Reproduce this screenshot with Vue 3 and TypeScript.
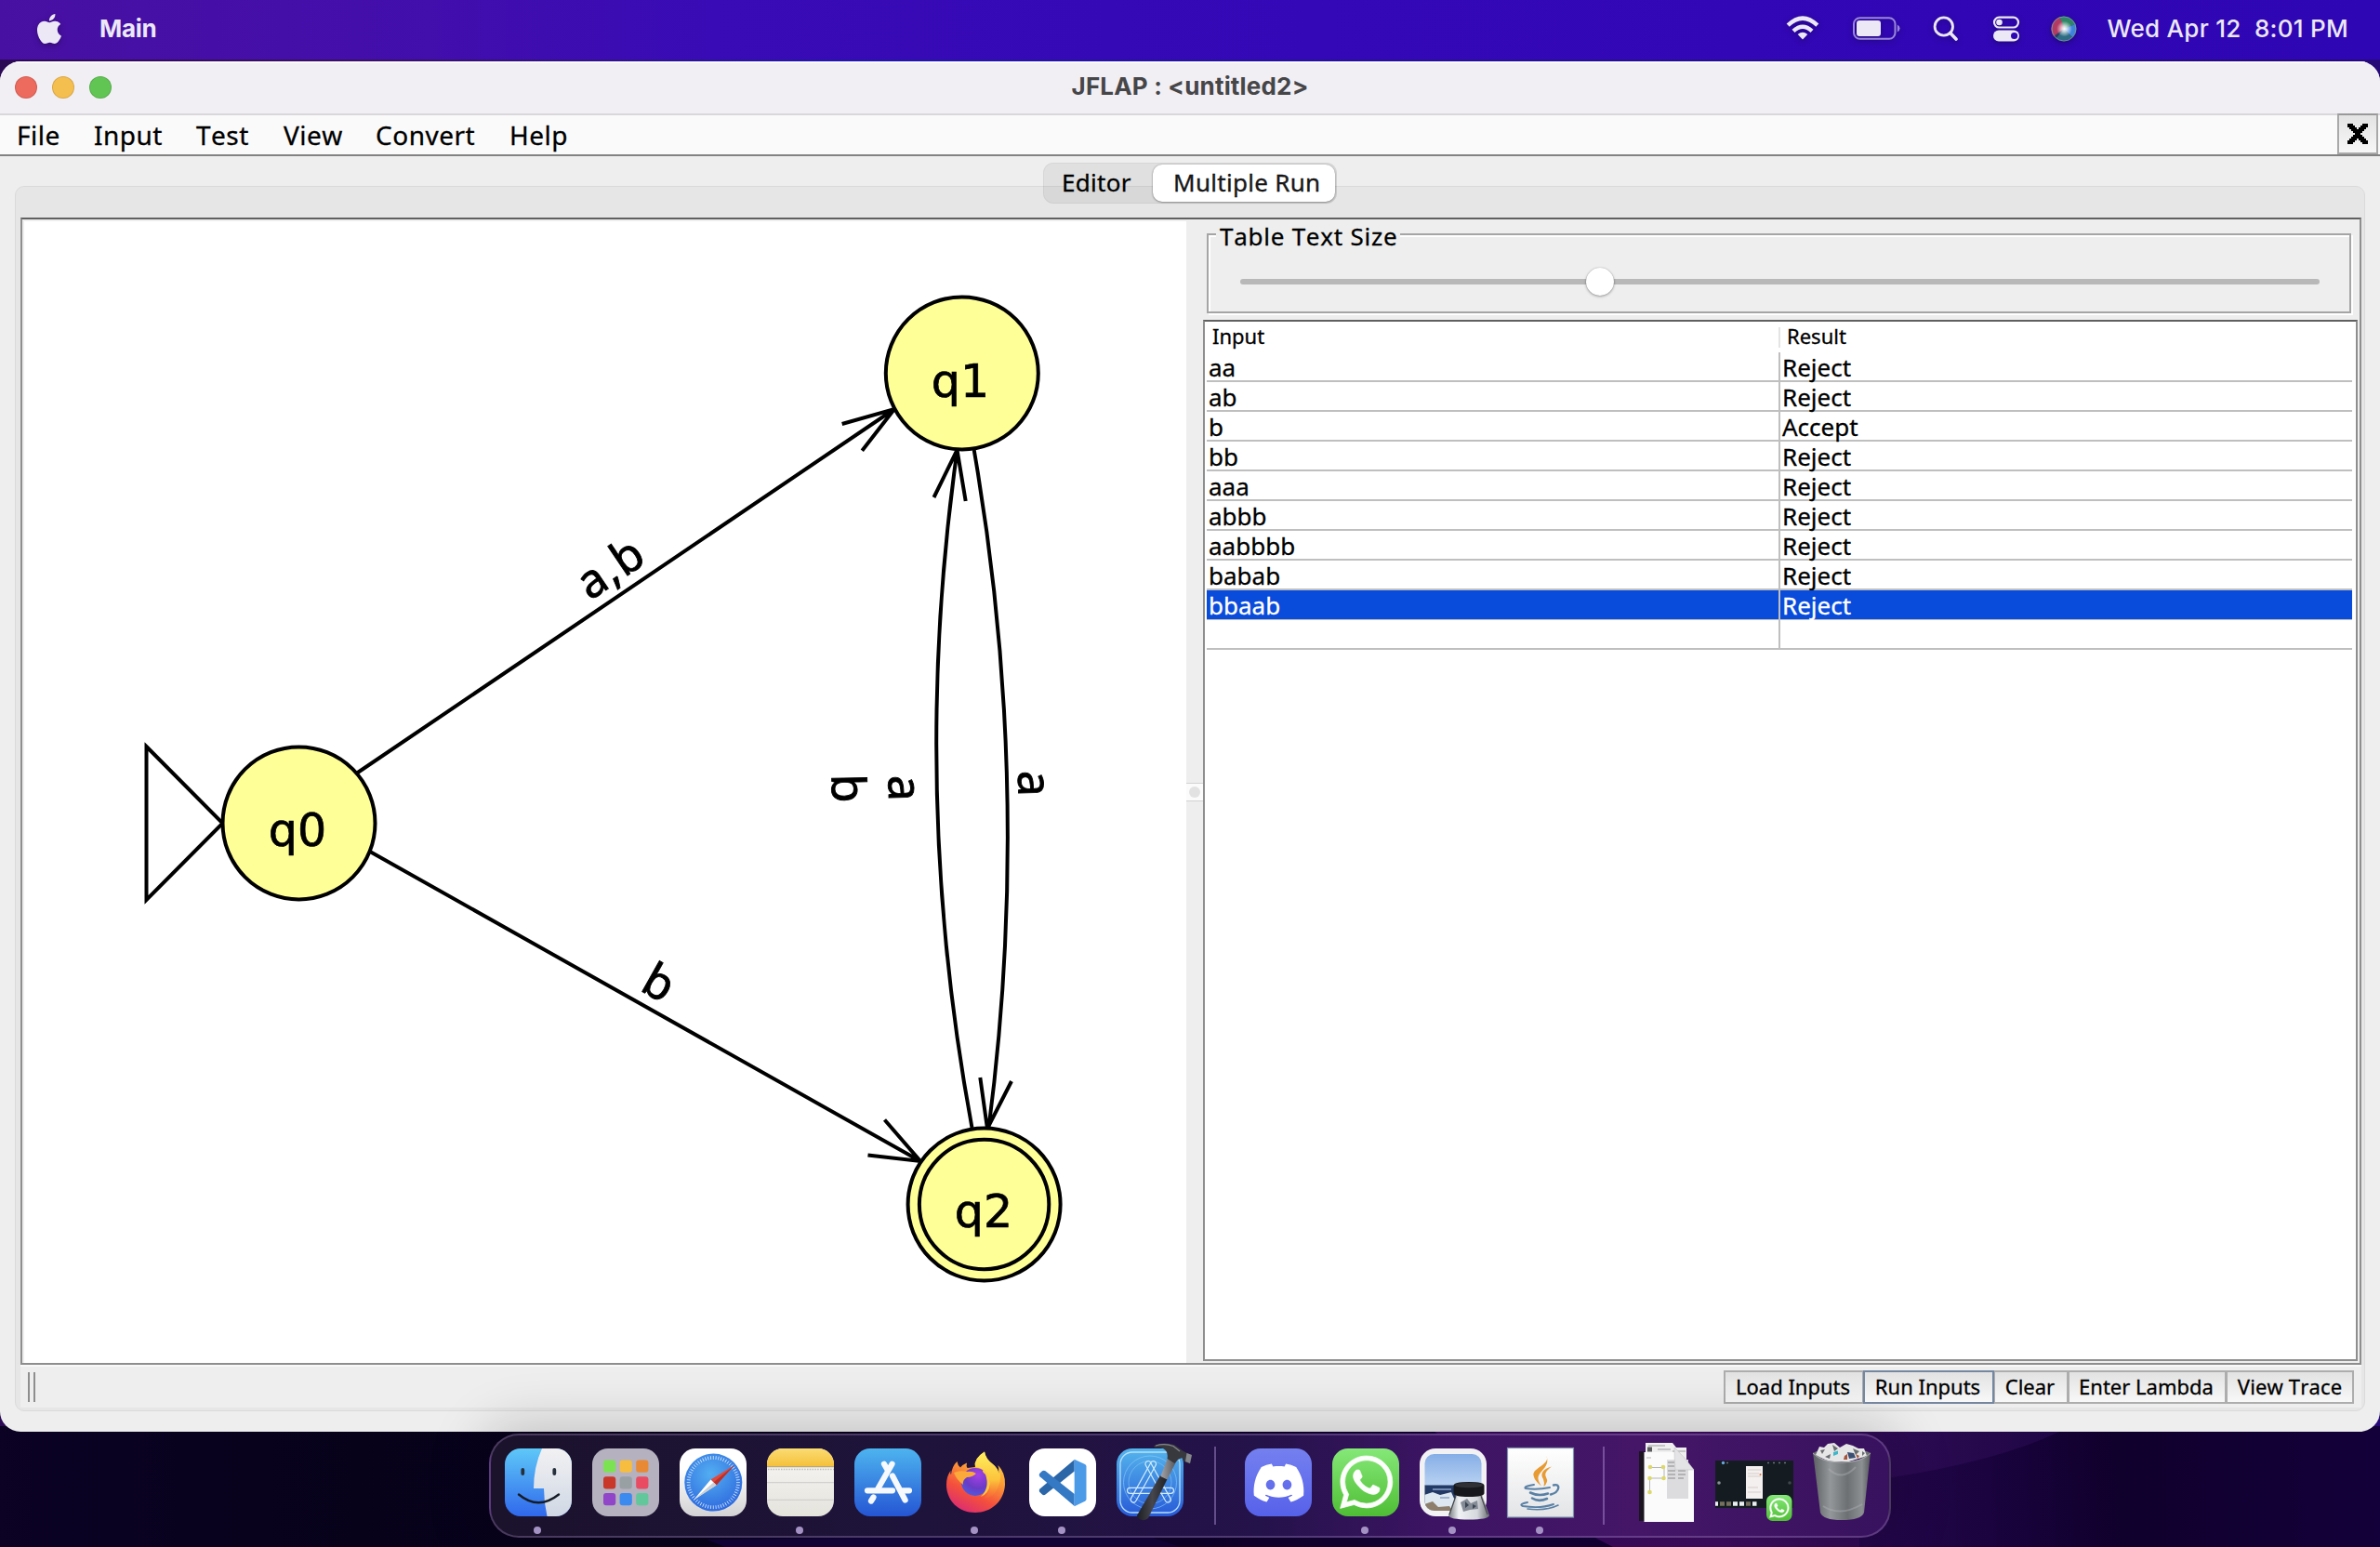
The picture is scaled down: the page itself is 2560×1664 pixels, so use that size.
<script setup lang="ts">
interface Run {
  input: string
  result: string
}

const menus: { label: string; key: string }[] = [
  { label: 'File', key: 'file' },
  { label: 'Input', key: 'input' },
  { label: 'Test', key: 'test' },
  { label: 'View', key: 'view' },
  { label: 'Convert', key: 'convert' },
  { label: 'Help', key: 'help' },
]

const runs: Run[] = [
  { input: 'aa', result: 'Reject' },
  { input: 'ab', result: 'Reject' },
  { input: 'b', result: 'Accept' },
  { input: 'bb', result: 'Reject' },
  { input: 'aaa', result: 'Reject' },
  { input: 'abbb', result: 'Reject' },
  { input: 'aabbbb', result: 'Reject' },
  { input: 'babab', result: 'Reject' },
  { input: 'bbaab', result: 'Reject' },
  { input: '', result: '' },
]
const selectedRow = 8

const actions: { label: string; key: string }[] = [
  { label: 'Load Inputs', key: 'load' },
  { label: 'Run Inputs', key: 'run' },
  { label: 'Clear', key: 'clear' },
  { label: 'Enter Lambda', key: 'lambda' },
  { label: 'View Trace', key: 'trace' },
]

const launchTiles: string[] = [
  '#7be352', '#f6bd3f', '#e88a35',
  '#c9362a', '#98a0a4', '#e94b62',
  '#9145c8', '#3a8af0', '#62c79b',
]

const ticks: number[] = Array.from({ length: 60 }, (_, i) => i * 6)
</script>

<template>
  <div class="desktop">
    <svg class="wallpaper" width="2560" height="130" viewBox="0 0 2560 130">
      <defs>
        <linearGradient id="wall" x1="0" x2="1" y1="0" y2="0">
          <stop offset="0" stop-color="#0b0224" />
          <stop offset=".15" stop-color="#07021a" />
          <stop offset=".4" stop-color="#090120" />
          <stop offset=".6" stop-color="#140038" />
          <stop offset="1" stop-color="#12003a" />
        </linearGradient>
        <linearGradient id="wave" gradientUnits="userSpaceOnUse" x1="1534" x2="2230" y1="0" y2="0">
          <stop offset="0" stop-color="#380a5c" />
          <stop offset=".45" stop-color="#400c64" />
          <stop offset=".75" stop-color="#2b0a52" />
          <stop offset="1" stop-color="#1e0644" />
        </linearGradient>
        <linearGradient id="night" gradientUnits="userSpaceOnUse" x1="2000" x2="2560" y1="90" y2="60">
          <stop offset="0" stop-color="#25074c" />
          <stop offset=".25" stop-color="#1a033e" />
          <stop offset=".5" stop-color="#10002c" />
          <stop offset="1" stop-color="#13003a" />
        </linearGradient>
      </defs>
      <rect width="2560" height="130" fill="url(#wall)" />
      <path d="M780 130 L760 122 Q1000 118 1240 120 L1270 130Z" fill="#13033c" />
      <path d="M1534 0 H2300 V130 H1735 L1710 117Z" fill="url(#wave)" />
      <path d="M2215 6 Q2140 42 2000 60 V130 H2560 V0 H2225Z" fill="url(#night)" />
    </svg>

    <header class="menubar">
      <div class="mb-left">
        <svg class="apple" width="32" height="32" viewBox="0 0 24 24" fill="#ece8f6">
          <path d="M12.152 6.896c-.948 0-2.415-1.078-3.96-1.04-2.04.027-3.91 1.183-4.961 3.014-2.117 3.675-.546 9.103 1.519 12.09 1.013 1.454 2.208 3.09 3.792 3.039 1.52-.065 2.09-.987 3.935-.987 1.831 0 2.35.987 3.96.948 1.637-.026 2.676-1.48 3.676-2.948 1.156-1.688 1.636-3.325 1.662-3.415-.039-.013-3.182-1.221-3.22-4.857-.026-3.04 2.48-4.494 2.597-4.559-1.429-2.09-3.623-2.324-4.39-2.376-2-.156-3.675 1.09-4.61 1.09zM15.53 3.83c.843-1.012 1.4-2.427 1.245-3.83-1.207.052-2.662.805-3.532 1.818-.78.896-1.454 2.338-1.273 3.714 1.338.104 2.715-.688 3.559-1.701" />
        </svg>
        <span class="app-name">Main</span>
      </div>
      <div class="mb-right">
        <svg width="36" height="28" viewBox="0 0 36 28">
          <g fill="none" stroke="#ece8f6" stroke-width="4.4">
            <path d="M2.2 10.2 Q18 -5 33.8 10.2" />
            <path d="M8 16.3 Q18 7.2 28 16.3" />
          </g>
          <path d="M18 25.500 L12.700 20 Q18 15.400 23.300 20Z" fill="#ece8f6" />
        </svg>
        <svg class="battery" width="51" height="26" viewBox="0 0 51 26">
          <rect x="1" y="1.200" width="44.500" height="22.600" rx="6.500" fill="none" stroke="#9a86dc" stroke-width="2" />
          <rect x="4" y="4" width="26" height="17" rx="3" fill="#ece8f6" />
          <path d="M47.800 8.500 Q50.600 10 50.600 12.500 T47.800 16.500Z" fill="#9a86dc" />
        </svg>
        <svg class="search" width="28" height="28" viewBox="0 0 28 28">
          <circle cx="11.800" cy="11.500" r="9.700" fill="none" stroke="#ece8f6" stroke-width="2.800" />
          <path d="M18.800 18.600 L25 25" stroke="#ece8f6" stroke-width="3.600" stroke-linecap="round" />
        </svg>
        <svg class="control" width="30" height="28" viewBox="0 0 30 28">
          <rect x="2" y="1.700" width="26" height="10.800" rx="5.400" fill="none" stroke="#ece8f6" stroke-width="2.200" />
          <circle cx="7.500" cy="7" r="3.300" fill="#ece8f6" />
          <rect x="1" y="15.600" width="28" height="12" rx="6" fill="#ece8f6" />
          <circle cx="23.600" cy="21.500" r="3.600" fill="#2f06b4" />
        </svg>
        <svg class="siri" width="28" height="28" viewBox="0 0 28 28">
          <defs>
            <radialGradient id="siriGlow" cx=".5" cy=".5" r=".5">
              <stop offset="0" stop-color="#fff" />
              <stop offset=".3" stop-color="#fff" stop-opacity=".75" />
              <stop offset="1" stop-color="#fff" stop-opacity="0" />
            </radialGradient>
          </defs>
          <circle cx="14" cy="14" r="13.600" fill="#2b3f63" />
          <path d="M14 14 L3 22 A13.600 13.600 0 0 1 9 1.500 Q14 6 14 14Z" fill="#b23a63" />
          <path d="M14 14 Q12 5 9 1.500 A13.600 13.600 0 0 1 26 9Z" fill="#2f8567" />
          <path d="M14 14 L26 9 A13.600 13.600 0 0 1 23 23Z" fill="#3d83dc" />
          <path d="M14 14 L23 23 A13.600 13.600 0 0 1 6 24Z" fill="#2e6c84" />
          <circle cx="14" cy="14" r="13" fill="none" stroke="#79a3ac" stroke-width="1" opacity=".8" />
          <circle cx="14.500" cy="14" r="8.500" fill="url(#siriGlow)" />
        </svg>
        <span class="clock">Wed Apr 12&nbsp; 8:01 PM</span>
      </div>
    </header>

    <main class="window">
      <div class="titlebar">
        <div class="lights"><i class="red" /><i class="amber" /><i class="green" /></div>
        <h1>JFLAP : &lt;untitled2&gt;</h1>
        <div class="lights-spacer" />
      </div>

      <nav class="menus">
        <span v-for="m in menus" :key="m.key" class="menu" :class="m.key">{{ m.label }}</span>
        <button class="close" aria-label="Close">
          <svg width="22" height="22" viewBox="0 0 11 11" shape-rendering="crispEdges">
            <path d="M0 0 H3 V1 H4 V2 H5 V3 H6 V2 H7 V1 H8 V0 H11 V2 H10 V3 H9 V4 H8 V5 H7 V6 H8 V7 H9 V8 H10 V9 H11 V11 H8 V10 H7 V9 H6 V8 H5 V9 H4 V10 H3 V11 H0 V9 H1 V8 H2 V7 H3 V6 H4 V5 H3 V4 H2 V3 H1 V2 H0Z" />
          </svg>
        </button>
      </nav>

      <div class="body">
        <div class="tabs">
          <span class="tab editor-tab">Editor</span>
          <span class="tab active">Multiple Run</span>
        </div>

        <section class="pane">
          <div class="split">
            <svg class="automaton" width="1250" height="1228" viewBox="26 238 1250 1228">
              <g class="ink">
                <path d="M384 831.500 L962 440 M905.700 456 L962 440 L927.300 484.800" />
                <path d="M398 916 L990 1249 M951.500 1204.500 L990 1249 L933.500 1242.500" />
                <path d="M1045.500 1213 Q978 849 1029.500 485 M1004.500 535 L1029.500 484 L1038.700 539" />
                <path d="M1047.700 484 Q1111 849 1063.500 1213 M1054.300 1159 L1062 1214 L1088 1163" />
                <path d="M157.500 803 L239.500 885.500 L157.500 968Z" fill="#fff" />
                <circle cx="321.500" cy="885.400" r="82" class="state" />
                <circle cx="1034.800" cy="401.400" r="82" class="state" />
                <circle cx="1058.600" cy="1295.500" r="82" class="state" />
                <circle cx="1058.600" cy="1295.500" r="69.700" class="state" />
              </g>
              <g class="state-name" text-anchor="middle">
                <text x="320" y="910">q0</text>
                <text x="1033" y="427">q1</text>
                <text x="1058" y="1320">q2</text>
              </g>
              <g class="edge-name">
                <text class="pair" transform="translate(634.500 646.500) rotate(-34.100)">a,b</text>
                <text transform="translate(687 1064.500) rotate(29.400)">b</text>
                <text transform="translate(1095 829) rotate(88.700)">a</text>
                <text transform="translate(955.500 834) rotate(88.700)">a</text>
                <text transform="translate(894.500 833) rotate(88.700)">b</text>
              </g>
            </svg>
            <div class="divider"><span class="handle"><i /></span></div>
            <div class="results">
              <fieldset class="sizer">
                <legend>Table Text Size</legend>
                <div class="track"><i class="knob" /></div>
              </fieldset>
              <div class="grid">
                <div class="row head"><span class="cell">Input</span><span class="cell">Result</span></div>
                <div v-for="(r, i) in runs" :key="i" class="row" :class="{ selected: i === selectedRow }">
                  <span class="cell">{{ r.input }}</span><span class="cell">{{ r.result }}</span>
                </div>
              </div>
            </div>
          </div>
          <div class="toolbar">
            <div class="grip"><i /><i /></div>
            <div class="buttons">
              <button v-for="a in actions" :key="a.key" :class="a.key">{{ a.label }}</button>
            </div>
          </div>
        </section>
      </div>
    </main>

    <footer class="dock">
      <div class="app">
        <svg width="72" height="73" viewBox="0 0 72 73">
          <defs>
            <linearGradient id="finderA" x1="0" x2="0" y1="0" y2="1"><stop offset="0" stop-color="#5ec8f8" /><stop offset="1" stop-color="#3068ec" /></linearGradient>
            <linearGradient id="finderB" x1="0" x2="0" y1="0" y2="1"><stop offset="0" stop-color="#f2f1f3" /><stop offset="1" stop-color="#cfd8e4" /></linearGradient>
            <clipPath id="tile"><rect width="72" height="73" rx="17" /></clipPath>
          </defs>
          <g clip-path="url(#tile)">
            <rect width="72" height="73" fill="url(#finderA)" />
            <path d="M40 0 Q31 20 31 43 H42 Q42 58 45.500 73 H72 V0Z" fill="url(#finderB)" />
          </g>
          <path d="M19.300 23 V27 M53.300 23 V27" stroke="#26303c" stroke-width="3.800" stroke-linecap="round" />
          <path d="M15 49.500 Q36 67 58 49.500" fill="none" stroke="#151c26" stroke-width="2.400" stroke-linecap="round" />
        </svg>
        <i class="dot" />
      </div>
      <div class="app">
        <svg width="72" height="73" viewBox="0 0 72 73">
          <rect width="72" height="73" rx="17" fill="#b5b1bf" />
          <rect v-for="(c, i) in launchTiles" :key="i" :x="12 + (i % 3) * 17.6" :y="12.600 + Math.floor(i / 3) * 17.700" width="13.200" height="13.200" rx="3" :fill="c" />
        </svg>
      </div>
      <div class="app">
        <svg width="72" height="73" viewBox="0 0 72 73">
          <defs>
            <linearGradient id="safBg" x1="0" x2="0" y1="0" y2="1"><stop offset=".3" stop-color="#fff" /><stop offset="1" stop-color="#d2d2d4" /></linearGradient>
            <radialGradient id="saf" cx=".45" cy=".35" r=".65"><stop offset="0" stop-color="#53aef2" /><stop offset="1" stop-color="#2e6ade" /></radialGradient>
          </defs>
          <rect width="72" height="73" rx="17" fill="url(#safBg)" />
          <circle cx="36.300" cy="36.600" r="31" fill="url(#saf)" />
          <path v-for="t in ticks" :key="t" d="M36.300 8 V11.800" :transform="`rotate(${t} 36.300 36.600)`" stroke="#dcecfb" stroke-width=".8" />
          <path d="M58.700 18.300 L33.500 33.500 L39.500 39.500Z" fill="#e0483c" />
          <path d="M58.700 18.300 L36.500 36.500 L39.500 39.500Z" fill="#b83029" />
          <path d="M15 55.500 L33.500 33.500 L39.500 39.500Z" fill="#fff" />
          <path d="M15 55.500 L36.500 36.500 L39.500 39.500Z" fill="#cdd0d3" />
        </svg>
      </div>
      <div class="app">
        <svg width="72" height="73" viewBox="0 0 72 73">
          <defs>
            <linearGradient id="noteTop" x1="0" x2="0" y1="0" y2="1"><stop offset="0" stop-color="#fbdc72" /><stop offset="1" stop-color="#f5c13b" /></linearGradient>
            <linearGradient id="notePaper" x1="0" x2="0" y1="0" y2="1"><stop offset="0" stop-color="#f8f7f5" /><stop offset="1" stop-color="#e4e3dc" /></linearGradient>
          </defs>
          <g clip-path="url(#tile)">
            <rect width="72" height="73" fill="url(#notePaper)" />
            <rect width="72" height="19" fill="url(#noteTop)" />
            <path d="M0 19.600 H72" stroke="#b9a778" stroke-width="1.200" />
            <path d="M1 22.500 H72" stroke="#bdbbb8" stroke-width="1.400" stroke-dasharray="1.400 1.400" />
            <path d="M0 36.700 H72 M0 55.300 H72" stroke="#d2d0cf" stroke-width="1.300" />
          </g>
        </svg>
        <i class="dot" />
      </div>
      <div class="app">
        <svg width="72" height="73" viewBox="0 0 72 73">
          <defs>
            <linearGradient id="store" x1="0" x2="0" y1="0" y2="1"><stop offset="0" stop-color="#4db4ef" /><stop offset="1" stop-color="#2555d4" /></linearGradient>
          </defs>
          <rect width="72" height="73" rx="17" fill="url(#store)" />
          <g stroke="#f6f9fe" stroke-width="6.200" stroke-linecap="round">
            <path d="M32 16.800 L35 22" />
            <path d="M40.500 16.800 L25.500 43" />
            <path d="M20.500 52.500 L18 56.500" />
            <path d="M41 29.500 L54.600 55.500" />
            <path d="M14 45.300 H41 M52 45.300 H59" />
          </g>
        </svg>
      </div>
      <div class="app">
        <svg width="72" height="73" viewBox="0 0 72 73">
          <defs>
            <linearGradient id="foxBody" x1=".8" x2=".3" y1="0" y2="1"><stop offset="0" stop-color="#fdd94c" /><stop offset=".35" stop-color="#fba035" /><stop offset=".7" stop-color="#f4503c" /><stop offset="1" stop-color="#dd2c72" /></linearGradient>
            <linearGradient id="foxTail" x1=".5" x2=".5" y1="0" y2="1"><stop offset="0" stop-color="#fff05f" /><stop offset=".6" stop-color="#fcc33c" /><stop offset="1" stop-color="#f8742f" stop-opacity=".2" /></linearGradient>
            <radialGradient id="foxGlobe" cx=".6" cy=".25" r=".8"><stop offset="0" stop-color="#a63fe8" /><stop offset=".6" stop-color="#6a3bc4" /><stop offset="1" stop-color="#4c5ce0" /></radialGradient>
          </defs>
          <path d="M16.500 14 Q17 18 20 20.500 Q23 17 27 15.500 Q26 19 27.500 21 L36 20 Q34 11 46 3.500 Q47 11 55 17 Q60 21 61.500 27 Q62 22 60.500 18 Q68.500 26 68 39 C67 57 53 69 36 69 C18 69 5 56 5 39 Q5 30 9.500 24 Q9 27 10 28 Q11 19 16.500 14Z" fill="url(#foxBody)" />
          <path d="M36 20 Q34 11 46 3.500 Q47 11 55 17 Q60 21 61.500 27 Q62 22 60.500 18 Q66 31 60 43 Q55 54 45 54 Q56 44 50 30 Q46 21 36 20Z" fill="url(#foxTail)" />
          <circle cx="36" cy="36" r="15" fill="url(#foxGlobe)" />
          <path d="M13 26 Q20 23 27 25 Q33 24 37 27 Q33 31 27 31 Q22 34 23 39 Q16 34 13 26Z" fill="#fba93a" />
          <path d="M47 28 Q42 24 45 23 Q52 27 52 38 Q51 48 42 52 Q52 42 47 28Z" fill="#fdc743" />
        </svg>
        <i class="dot" />
      </div>
      <div class="app">
        <svg width="72" height="73" viewBox="0 0 72 73">
          <rect width="72" height="73" rx="17" fill="#fff" />
          <path d="M48.700 12 V24.500 L17.500 49.500 Q15.700 50.800 14 49.500 L11.200 46.800 Q10 45 11.500 43.500Z" fill="#2a66a8" />
          <path d="M48.700 62 V49 L17.500 24.300 Q15.700 23 14 24.300 L11.200 27 Q10 28.800 11.500 30.300Z" fill="#3579c4" />
          <path d="M48.700 11.700 L60 17 Q61.500 17.800 61.500 19.500 V54.500 Q61.500 56 60 56.800 L48.700 62.200Z" fill="#4b9ae8" />
        </svg>
        <i class="dot" />
      </div>
      <div class="app">
        <svg width="72" height="73" viewBox="0 0 72 73">
          <defs>
            <linearGradient id="xc" x1="0" x2="0" y1="0" y2="1"><stop offset="0" stop-color="#54b5ec" /><stop offset="1" stop-color="#285ad8" /></linearGradient>
            <linearGradient id="hammer" x1="0" x2="1"><stop offset="0" stop-color="#1c1d22" /><stop offset=".5" stop-color="#46474e" /><stop offset="1" stop-color="#202126" /></linearGradient>
            <linearGradient id="steel" x1="0" x2="1"><stop offset="0" stop-color="#a2a4a9" /><stop offset="1" stop-color="#505157" /></linearGradient>
          </defs>
          <rect width="72" height="73" rx="17" fill="url(#xc)" />
          <rect x="4" y="4" width="64" height="65" rx="13" fill="none" stroke="#b8e0fa" stroke-width="1.300" />
          <g fill="none" stroke="#8ecbf5" stroke-width=".9">
            <circle cx="36" cy="36.500" r="28.500" opacity=".7" />
            <circle cx="36" cy="36.500" r="23" opacity=".6" />
          </g>
          <g fill="none" stroke="#d3ecfd" stroke-width="1.200">
            <rect x="-3" y="0" width="6" height="50" rx="3" transform="translate(41 14) rotate(29)" />
            <rect x="-3" y="0" width="6" height="50" rx="3" transform="translate(32.500 14) rotate(-29)" />
            <rect x="11.500" y="42.300" width="50" height="6" rx="3" />
          </g>
          <path d="M47 29 L54.500 33 L34 75 Q29 79.500 22.500 74.500 L22 72Z" fill="url(#hammer)" />
          <path d="M56 8 L65 12.500 L54.500 33.500 L47.300 30Z" fill="url(#steel)" />
          <path d="M40 -3 Q50 -7.500 62 -4 L72 3 L75 4.500 L81 7 L79 16.500 L72.500 14 L70.500 10 L66 12 L62.500 16 L54.500 11 Q56 3 50 0 Q46 -2 41 -1Z" fill="#38393f" />
          <path d="M42 -3 Q52 -6 61 -2.500 L68 3" fill="none" stroke="#85878d" stroke-width="1.300" />
          <path d="M75.500 5 L81 7 L79 16 L74 14Z" fill="#85878d" />
        </svg>
      </div>
      <i class="sep first" />
      <div class="app">
        <svg width="72" height="73" viewBox="0 0 72 73">
          <defs>
            <linearGradient id="disc" x1="0" x2="0" y1="0" y2="1"><stop offset="0" stop-color="#7480ef" /><stop offset="1" stop-color="#5661ea" /></linearGradient>
          </defs>
          <rect width="72" height="73" rx="17" fill="url(#disc)" />
          <path transform="translate(9.600 10.200) scale(2.240)" fill="#fff" d="M20.317 4.3698a19.7913 19.7913 0 00-4.8851-1.5152.0741.0741 0 00-.0785.0371c-.211.3753-.4447.8648-.6083 1.2495-1.8447-.2762-3.68-.2762-5.4868 0-.1636-.3933-.4058-.8742-.6177-1.2495a.077.077 0 00-.0785-.037 19.7363 19.7363 0 00-4.8852 1.515.0699.0699 0 00-.0321.0277C.5334 9.0458-.319 13.5799.0992 18.0578a.0824.0824 0 00.0312.0561c2.0528 1.5076 4.0413 2.4228 5.9929 3.0294a.0777.0777 0 00.0842-.0276c.4616-.6304.8731-1.2952 1.226-1.9942a.076.076 0 00-.0416-.1057c-.6528-.2476-1.2743-.5495-1.8722-.8923a.077.077 0 01-.0076-.1277c.1258-.0943.2517-.1923.3718-.2914a.0743.0743 0 01.0776-.0105c3.9278 1.7933 8.18 1.7933 12.0614 0a.0739.0739 0 01.0785.0095c.1202.099.246.1981.3728.2924a.077.077 0 01-.0066.1276 12.2986 12.2986 0 01-1.873.8914.0766.0766 0 00-.0407.1067c.3604.698.7719 1.3628 1.225 1.9932a.076.076 0 00.0842.0286c1.961-.6067 3.9495-1.5219 6.0023-3.0294a.077.077 0 00.0313-.0552c.5004-5.177-.8382-9.6739-3.5485-13.6604a.061.061 0 00-.0312-.0286zM8.02 15.3312c-1.1825 0-2.1569-1.0857-2.1569-2.419 0-1.3332.9555-2.4189 2.157-2.4189 1.2108 0 2.1757 1.0952 2.1568 2.419 0 1.3332-.9555 2.4189-2.1569 2.4189zm7.9748 0c-1.1825 0-2.1569-1.0857-2.1569-2.419 0-1.3332.9554-2.4189 2.1569-2.4189 1.2108 0 2.1757 1.0952 2.1568 2.419 0 1.3332-.946 2.4189-2.1568 2.4189Z" />
        </svg>
      </div>
      <div class="app">
        <svg width="72" height="73" viewBox="0 0 72 73">
          <defs>
            <linearGradient id="wa" x1="0" x2="0" y1="0" y2="1"><stop offset="0" stop-color="#85e878" /><stop offset="1" stop-color="#4fbe35" /></linearGradient>
            <path id="waGlyph" d="M17.472 14.382c-.297-.149-1.758-.867-2.03-.967-.273-.099-.471-.148-.67.15-.197.297-.767.966-.94 1.164-.173.199-.347.223-.644.075-.297-.15-1.255-.463-2.39-1.475-.883-.788-1.48-1.761-1.653-2.059-.173-.297-.018-.458.13-.606.134-.133.298-.347.446-.52.149-.174.198-.298.298-.497.099-.198.05-.371-.025-.52-.075-.149-.669-1.612-.916-2.207-.242-.579-.487-.5-.669-.51-.173-.008-.371-.01-.57-.01-.198 0-.52.074-.792.372-.272.297-1.04 1.016-1.04 2.479 0 1.462 1.065 2.875 1.213 3.074.149.198 2.096 3.2 5.077 4.487.709.306 1.262.489 1.694.625.712.227 1.36.195 1.871.118.571-.085 1.758-.719 2.006-1.413.248-.694.248-1.289.173-1.413-.074-.124-.272-.198-.57-.347m-5.421 7.403h-.004a9.87 9.87 0 01-5.031-1.378l-.361-.214-3.741.982.998-3.648-.235-.374a9.86 9.86 0 01-1.51-5.26c.001-5.45 4.436-9.884 9.888-9.884 2.64 0 5.122 1.03 6.988 2.898a9.825 9.825 0 012.893 6.994c-.003 5.45-4.437 9.884-9.885 9.884m8.413-18.297A11.815 11.815 0 0012.05 0C5.495 0 .16 5.335.157 11.892c0 2.096.547 4.142 1.588 5.945L.057 24l6.305-1.654a11.882 11.882 0 005.683 1.448h.005c6.554 0 11.89-5.335 11.893-11.893a11.821 11.821 0 00-3.48-8.413Z" />
          </defs>
          <rect width="72" height="73" rx="17" fill="url(#wa)" />
          <use href="#waGlyph" transform="translate(8.500 8) scale(2.350)" fill="#fdfffc" stroke="#fdfffc" stroke-width=".3" />
        </svg>
        <i class="dot" />
      </div>
      <div class="app">
        <svg width="72" height="73" viewBox="0 0 72 73">
          <defs>
            <linearGradient id="sky" x1="0" x2="0" y1="0" y2="1"><stop offset="0" stop-color="#84ade6" /><stop offset="1" stop-color="#b9d2f2" /></linearGradient>
            <linearGradient id="glass" x1="0" x2="1"><stop offset="0" stop-color="#777b80" /><stop offset=".25" stop-color="#f0f2f4" /><stop offset=".7" stop-color="#d5d8dc" /><stop offset="1" stop-color="#686b70" /></linearGradient>
            <clipPath id="photo"><rect x="5.500" y="6" width="61" height="61" rx="10" /></clipPath>
          </defs>
          <rect width="72" height="73" rx="17" fill="#f2f1f3" />
          <g clip-path="url(#photo)">
            <rect x="5" y="5" width="62" height="35" fill="url(#sky)" />
            <rect x="5" y="39.500" width="62" height="28" fill="#243a66" />
            <path d="M5 50 L14 47 L22 50 L34 47 L38 56 V68 H5Z" fill="#dde8f1" />
            <path d="M5 60 L14 57 L20 63 L32 62 L36 68 H5Z" fill="#8d7f6b" />
            <path d="M14 44 H34 M22 53 H32" stroke="#8aa3c8" stroke-width="1.500" />
          </g>
          <path d="M39 50 L67 50 L75 72 Q74 76.500 53 76.500 Q32 76.500 31 72Z" fill="url(#glass)" />
          <path d="M44 58 L51 54 L55 59 L62 56 L63 65 L54 66 L47 68Z" fill="#858c96" />
          <path d="M49 57 L53 61 L49 64Z M57 60 L61 62 L57 65Z" fill="#3c4654" />
          <path d="M39 51 L32 71 M66 51 L73 71" stroke="#44474b" stroke-width="1.200" />
          <path d="M36.500 40 Q36.500 36 53 36 Q69.500 36 69.500 40 V48 Q69.500 52 53 52 Q36.500 52 36.500 48Z" fill="#17181b" />
          <ellipse cx="53" cy="39.500" rx="15" ry="2.700" fill="#2f3135" />
        </svg>
        <i class="dot" />
      </div>
      <div class="app">
        <svg width="72" height="73" viewBox="0 0 72 73">
          <defs>
            <linearGradient id="jar" x1="0" x2="0" y1="0" y2="1"><stop offset="0" stop-color="#fff" /><stop offset="1" stop-color="#e3e4e6" /></linearGradient>
          </defs>
          <rect x=".5" y="-.5" width="71" height="74.500" fill="url(#jar)" stroke="#7d93ab" stroke-width="1.200" />
          <path d="M42.500 8 C47 17 27 21 28.500 29 C29.500 34 33 37 37 40.500 C33 34 32 31 36 26 C40 21 45.500 17 42.500 8Z" fill="#e79b32" />
          <path d="M48 19.500 C39 22 35 27 39 33 Q40.500 36 39.500 41 Q45 36 42 31 C40 27 42 24 48 19.500Z" fill="#e79b32" />
          <g fill="none" stroke="#5a80a5" stroke-linecap="round">
            <path d="M29 39 Q17 41 20 43 Q32 45 46 42" stroke-width="2" />
            <path d="M50 39.500 C58 37 57 47 47 49.500" stroke-width="2.400" />
            <path d="M25 47.500 Q34 52 44 48.500" stroke-width="2.600" />
            <path d="M27 53.500 Q34 58 43 54" stroke-width="2.600" />
            <path d="M22 58 Q12 60 17 62 Q36 65 50 60" stroke-width="2" />
            <path d="M22 65 Q42 67.500 55 61" stroke-width="1.600" />
          </g>
        </svg>
        <i class="dot" />
      </div>
      <i class="sep second" />
      <div class="app docs">
        <svg width="60" height="73" viewBox="0 0 60 73">
          <path d="M0 3 H6 V78 H0Z" fill="#1b1520" />
          <path d="M7 -6 H36 L40 -1 H51 V20 H7Z" fill="#efeff0" />
          <path d="M10 -3 H28 M20 1 H34 M36 3 H50" stroke="#b9b9bb" stroke-width="1.500" />
          <rect x="9" y="-1.500" width="5" height="5" fill="#5c5c5e" />
          <path d="M5.500 4 H38 L59 23 V79 H5.500Z" fill="#fbfbfc" />
          <rect x="30" y="12" width="23" height="42" fill="#dcdcde" />
          <path d="M31 15 H38 M31 19 H38 M31 24 H50 M31 28 H50 M31 32 H48" stroke="#8a8a8d" stroke-width="1.200" stroke-dasharray="8 3" />
          <path d="M8 10 H13 M12 20.500 H27 M12 32 H27 M27 20.500 V32 M11.500 33 V47" fill="none" stroke="#a4a4a8" stroke-width=".8" />
          <g fill="#dcd96a"><circle cx="12" cy="20" r="2.300" /><circle cx="26" cy="20" r="2.300" /><circle cx="11.500" cy="32" r="2.300" /><circle cx="26.500" cy="32" r="2.300" /><circle cx="11.500" cy="47" r="2.300" /></g>
          <path d="M38 -1 Q38 12 39 23 H59 Q48 8 38 -1Z" fill="#e4e4e6" stroke="#c3c3c6" stroke-width=".6" />
        </svg>
      </div>
      <div class="app shot">
        <svg width="84" height="73" viewBox="0 0 84 73">
          <rect y="13" width="84" height="51" fill="#141c22" />
          <rect x="33" y="19" width="18" height="35" fill="#f3f0ef" />
          <path d="M35 23 H49 M35 27 H47 M35 30 H49 M35 42 H46 M35 47 H49" stroke="#c9bfbd" stroke-width=".7" />
          <circle cx="48.500" cy="28" r="1" fill="#e0763c" />
          <circle cx="4" cy="37" r="1.800" fill="#8a9094" />
          <circle cx="80" cy="37" r="1.800" fill="#3d474c" />
          <circle cx="8.500" cy="15.500" r="1.700" fill="#6aa7d9" />
          <path d="M12 15.500 H17 M56 15.500 H80" stroke="#68727a" stroke-width="1.300" stroke-dasharray="2 4" />
          <path d="M0 59.500 H3 M19 59.500 H24 M26 59.500 H31 M40 59.500 H44.500" stroke="#eceff0" stroke-width="4.600" />
          <path d="M5 59.500 H10 M12 59.500 H17 M33 59.500 H38" stroke="#77705f" stroke-width="4.600" />
          <rect x="55" y="50" width="27.500" height="28" rx="6.500" fill="url(#wa)" />
          <use href="#waGlyph" transform="translate(58.300 53.400) scale(.880)" fill="#fdfffc" stroke="#fdfffc" stroke-width=".3" />
        </svg>
      </div>
      <div class="app trash">
        <svg width="64" height="73" viewBox="0 0 64 73">
          <defs>
            <linearGradient id="can" x1="0" x2="1"><stop offset="0" stop-color="#5d6063" /><stop offset=".3" stop-color="#94979a" /><stop offset=".6" stop-color="#6d7073" /><stop offset=".85" stop-color="#8d9093" /><stop offset="1" stop-color="#55585b" /></linearGradient>
          </defs>
          <ellipse cx="32" cy="6" rx="31" ry="6" fill="#6c6f72" />
          <path d="M4 7 L8 -2 L13 -1 L17 -5 L24 -6 L30 -1 L37 -5 L44 -3 L50 0 L56 0 L59 8 L40 14 H18Z" fill="#e6e6e7" />
          <path d="M9 2 L14 1 L11 6Z M22 -4 L28 0 L24 3Z M44 0 L51 3 L47 7Z M14 9 L20 6 L19 11Z M54 3 L57 5 L54 8Z" fill="#696c6f" />
          <path d="M23 4 L28 2.500 L28 6 L23 8Z" fill="#3fb7c9" />
          <path d="M38 4 L45 5 L47 10 L40 11Z" fill="#3c4e74" />
          <path d="M35 8 L38 6 L38 12 L34 12Z M47 6 L51 8 L49 11Z" fill="#a6553a" />
          <path d="M1 4 Q10 14.500 32 14.500 Q54 14.500 63 4 L56 69 Q53 77 32 77 Q12 77 9 69Z" fill="url(#can)" />
          <path d="M1 5 Q10 15 32 15 Q54 15 63 5" fill="none" stroke="#a9acaf" stroke-width="1" />
          <path d="M18 22 Q32 36 47 20 M12 62 Q30 74 54 60" fill="none" stroke="#b2b5b8" stroke-width="2" opacity=".4" />
        </svg>
      </div>
    </footer>
  </div>
</template>

<style>
body {
  margin: 0;
}
</style>

<style scoped>
.desktop {
  position: relative;
  display: flex;
  flex-direction: column;
  align-items: center;
  width: 2560px;
  height: 1664px;
  overflow: hidden;
  background: linear-gradient(90deg, #2c0a56, #3b1160 15%, #2318a8 35%, #260a78);
  font-family: 'Noto Sans', 'Liberation Sans', sans-serif;
  font-kerning: none;
  color: #000;
}
.wallpaper {
  position: absolute;
  left: 0;
  bottom: 0;
}
i {
  display: block;
}
svg {
  display: block;
  overflow: visible;
  flex: none;
}

.menubar {
  display: flex;
  justify-content: space-between;
  width: 100%;
  height: 64px;
  box-sizing: border-box;
  padding: 0 34px 0 37px;
  background: linear-gradient(90deg, #4810a2, #420eac 18%, #380bb6 30%, #3408b6 55%, #2f06b4);
  font-family: Inter, sans-serif;
  font-kerning: normal;
  font-size: 26px;
  line-height: 62px;
  color: #ece8f6;
}
.mb-left,
.mb-right {
  display: flex;
  align-items: center;
  height: 62px;
}
.mb-left svg,
.mb-right svg {
  filter: drop-shadow(0 2px 3px rgba(0, 0, 0, 0.3));
}
.app-name {
  margin-left: 38px;
  font-weight: 700;
  letter-spacing: -0.3px;
}
.battery { margin-left: 36px; }
.search { margin-left: 35px; }
.control { margin-left: 36px; }
.siri { margin-left: 33px; }
.clock {
  margin-left: 32px;
  font-weight: 500;
  letter-spacing: 0.27px;
  white-space: pre;
}

.window {
  position: relative;
  display: flex;
  flex-direction: column;
  width: 2560px;
  height: 1474px;
  margin-top: 2px;
  border-radius: 22px;
  overflow: hidden;
  background: #eee;
}
.titlebar {
  display: flex;
  align-items: center;
  justify-content: space-between;
  height: 56px;
  padding: 0 16px;
  border-bottom: 2px solid #dad7dc;
  background: #f1eff4;
  box-shadow: inset 0 2px 0 #fbfafc;
}
.lights {
  display: flex;
  gap: 16px;
  width: 104px;
}
.lights-spacer {
  width: 104px;
}
.lights i {
  width: 24px;
  height: 24px;
  box-sizing: border-box;
  border: 1px solid rgba(0, 0, 0, 0.12);
  border-radius: 50%;
}
.red { background: #ed6a5e; }
.amber { background: #f5bf4f; }
.green { background: #61c554; }
h1 {
  margin: 0;
  padding-bottom: 2px;
  font: 700 26px/52px Inter, sans-serif;
  font-kerning: normal;
  letter-spacing: 0.18px;
  color: #464649;
}

.menus {
  display: flex;
  height: 42px;
  padding: 0 2px 0 18px;
  border-bottom: 2px solid #828282;
  background: #fafafa;
  font-size: 28px;
  line-height: 42px;
  letter-spacing: 0.5px;
  -webkit-text-stroke: 0.3px #000;
}
.menu { width: 83px; flex: none; }
.menu.input { width: 110px; }
.menu.test { width: 94px; }
.menu.view { width: 99px; }
.menu.convert { width: 144px; }
.close {
  display: flex;
  align-items: center;
  justify-content: center;
  width: 44px;
  height: 44px;
  margin: -2px 0 0 auto;
  padding: 0;
  border: 2px solid #a9a9a9;
  border-top-color: #999;
  background: linear-gradient(#e3e3e3, #f7f7f7);
}

.body {
  display: flex;
  flex-direction: column;
  align-items: center;
  padding: 7px 16px 0;
}
.tabs {
  display: flex;
  z-index: 1;
  height: 40px;
  padding: 2px;
  border-radius: 11px;
  background: rgba(0, 0, 0, 0.058);
  box-shadow: inset 0 0 0 1px rgba(0, 0, 0, 0.04);
  font-size: 26px;
  line-height: 39px;
  -webkit-text-stroke: 0.3px #000;
}
.tab {
  box-sizing: border-box;
  width: 116px;
  padding-left: 18px;
  letter-spacing: 0.3px;
}
.tab.active {
  width: 196px;
  padding-left: 22px;
  border-radius: 10px;
  background: #fff;
  box-shadow: 0 0 2px rgba(0, 0, 0, 0.35), 0 1px 2px rgba(0, 0, 0, 0.25);
  color: #1b1b1b;
}
.pane {
  width: 2518px;
  height: 1280px;
  margin-top: -19px;
  padding: 33px 3px 3px 5px;
  border: 1px solid #dadada;
  border-radius: 10px;
  background: #e6e6e6;
}
.split {
  display: flex;
  box-sizing: border-box;
  height: 1234px;
  border: 2px solid #8e8e8e;
  border-top-color: #606060;
  background: #eee;
}
.automaton {
  margin: 2px 0 0 2px;
  background: #fff;
  overflow: hidden;
}
.ink {
  fill: none;
  stroke: #000;
  stroke-width: 4;
}
.state {
  fill: #ffff98;
}
.state-name {
  font: 49px 'DejaVu Sans', sans-serif;
  stroke: #000;
  stroke-width: 0.7;
}
.edge-name {
  font: 50px 'Noto Sans', sans-serif;
  stroke: #000;
  stroke-width: 0.9;
}
.pair {
  letter-spacing: 1.6px;
}
.divider {
  display: flex;
  align-items: center;
  box-sizing: border-box;
  width: 18px;
  padding-top: 2px;
  flex: none;
}
.handle {
  display: flex;
  align-items: center;
  justify-content: center;
  box-sizing: border-box;
  width: 18px;
  height: 20px;
  border: solid #d2d2d2;
  border-width: 1px 0;
  background: #fbfbfb;
}
.handle i {
  width: 12px;
  height: 12px;
  border-radius: 50%;
  background: #e2e2e2;
}
.results {
  display: flex;
  flex-direction: column;
  width: 1242px;
  flex: none;
}
.sizer {
  box-sizing: border-box;
  height: 101px;
  min-width: 0;
  margin: 0 7px 0 4px;
  padding: 32px 32px 0 34px;
  border: 2px solid #a5a5a5;
  box-shadow: 2px 2px 0 #fff, inset 2px 2px 0 #fff;
}
.sizer legend {
  margin-left: -26px;
  padding: 5px 3px 0 4px;
  background: #eee;
  font-size: 26px;
  line-height: 27px;
  letter-spacing: 0.75px;
  -webkit-text-stroke: 0.3px #000;
}
.track {
  display: flex;
  align-items: center;
  height: 6px;
  border-radius: 3px;
  background: #b8b8b8;
}
.knob {
  width: 30px;
  height: 30px;
  margin-left: 372px;
  border-radius: 50%;
  background: #fff;
  box-shadow: 0 1px 3px rgba(0, 0, 0, 0.35), 0 0 1px rgba(0, 0, 0, 0.3);
}
.grid {
  display: flex;
  flex-direction: column;
  box-sizing: border-box;
  height: 1120px;
  margin-top: 7px;
  padding: 0 4px 0 2px;
  border: 2px solid #8e8e8e;
  border-top-color: #606060;
  background: #fff;
}
.row {
  display: flex;
  height: 32px;
  box-sizing: border-box;
  border-bottom: 2px solid #bfbfbf;
  font-size: 26px;
  line-height: 32px;
  -webkit-text-stroke: 0.3px currentColor;
}
.cell {
  box-sizing: border-box;
  width: 615px;
  height: 30px;
  padding-left: 2px;
}
.cell + .cell {
  width: 617px;
  border-left: 2px solid #bfbfbf;
  padding-left: 2px;
}
.row.head {
  height: 33px;
  border-bottom: 0;
  font-size: 22px;
  line-height: 31px;
}
.head .cell {
  padding-left: 6px;
}
.head .cell + .cell {
  height: 22px;
  margin-top: 6px;
  padding-left: 7px;
  border-color: #e4e4e4;
  line-height: 19px;
}
.row.selected {
  background: #094bdb;
  border-bottom-width: 1px;
  color: #fff;
}
.row.selected .cell {
  height: 31px;
}

.toolbar {
  display: flex;
  justify-content: space-between;
  box-sizing: border-box;
  height: 46px;
  padding: 4px 8px 4px;
  border-top: 2px solid #f8f8f8;
  background: #eee;
}
.grip {
  display: flex;
  gap: 4px;
  height: 32px;
  margin-top: 2px;
}
.grip i {
  width: 2px;
  background: #8e8e8e;
}
.buttons {
  display: flex;
}
.buttons button {
  box-sizing: border-box;
  height: 36px;
  margin: 0 0 0 -1px;
  padding: 0 2px 1px 0;
  border: 2px solid #adadad;
  background: linear-gradient(#e2e2e2, #f8f8f8);
  font: 22px/31px 'Noto Sans', sans-serif;
  font-kerning: none;
  color: #000;
  white-space: nowrap;
  -webkit-text-stroke: 0.3px #000;
}
.load { width: 151px; }
.buttons .run { width: 141px; border-color: #7486a0; z-index: 1; }
.clear { width: 81px; }
.lambda { width: 171px; }
.buttons .trace { width: 138px; padding-right: 0; letter-spacing: 0.15px; }

.dock {
  position: relative;
  display: flex;
  gap: 22px;
  box-sizing: border-box;
  width: 1508px;
  height: 112px;
  margin-top: 2px;
  padding-left: 15px;
  border: 2px solid rgba(190, 160, 220, 0.28);
  border-radius: 32px;
  background: linear-gradient(90deg, #1b122c, #1e133a 30%, #24124a 55%, #3d1464 68%, #451668 82%, #38125e);
  box-shadow: 0 0 60px 8px rgba(0, 0, 0, 0.2);
}
.app {
  display: flex;
  flex-direction: column;
  align-items: center;
  padding-top: 14px;
}
.dot {
  width: 8px;
  height: 8px;
  margin: 11px 2px 0 0;
  border-radius: 50%;
  background: #a592c4;
}
.sep {
  width: 2px;
  height: 84px;
  margin-top: 12px;
  background: rgba(180, 150, 220, 0.45);
}
.sep.first { margin-left: 11px; margin-right: 9px; }
.sep.second { margin-left: 9px; margin-right: 15px; }
.trash { margin-left: -2px; }
</style>
